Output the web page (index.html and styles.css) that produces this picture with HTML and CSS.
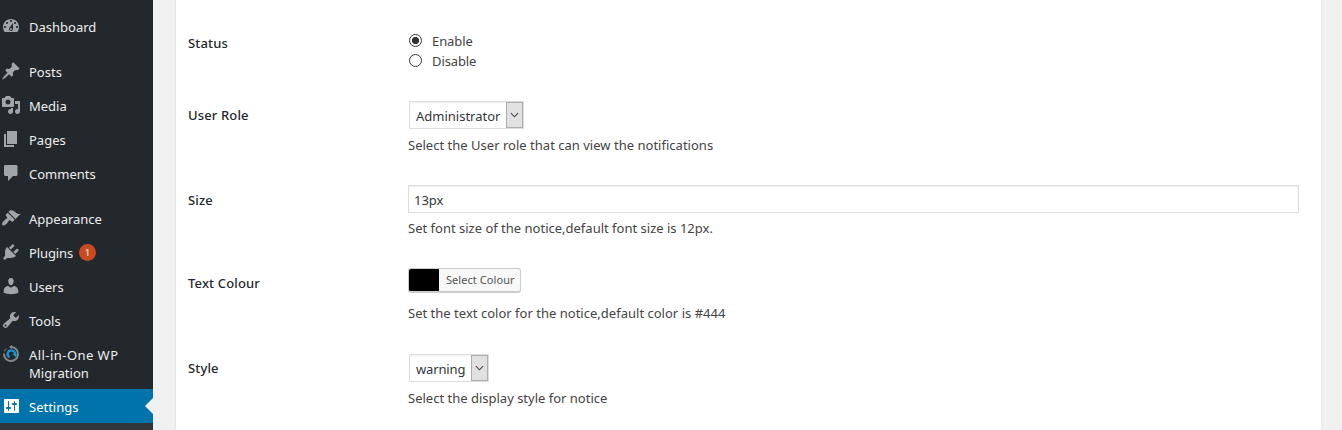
FILE: index.html
```html
<!DOCTYPE html>
<html lang="en">
<head>
<meta charset="utf-8">
<title>Settings</title>
<link rel="stylesheet" href="styles.css">
</head>
<body>
<div class="layout">
  <nav class="menu">
    <a class="item"><svg class="icon" viewBox="0 0 20 20"><path fill-rule="evenodd" d="M3.76 16h12.48c1.1-1.37 1.76-3.11 1.76-5 0-4.42-3.58-8-8-8s-8 3.58-8 8c0 1.89.66 3.63 1.76 5zM10 4c.55 0 1 .45 1 1s-.45 1-1 1-1-.45-1-1 .45-1 1-1zM6 6c.55 0 1 .45 1 1s-.45 1-1 1-1-.45-1-1 .45-1 1-1zm8 0c.55 0 1 .45 1 1s-.45 1-1 1-1-.45-1-1 .45-1 1-1zm-5.37 5.55L12 7v6c0 1.1-.9 2-2 2s-2-.9-2-2c0-.57.24-1.08.63-1.45zM4 10c.55 0 1 .45 1 1s-.45 1-1 1-1-.45-1-1 .45-1 1-1zm12 0c.55 0 1 .45 1 1s-.45 1-1 1-1-.45-1-1 .45-1 1-1zm-5 3c0-.55-.45-1-1-1s-1 .45-1 1 .45 1 1 1 1-.45 1-1z"/></svg><span>Dashboard</span></a>
    <div class="separator"></div>
    <a class="item"><svg class="icon" viewBox="0 0 20 20"><path d="M10.44 3.02l1.82-1.82 6.36 6.35-1.83 1.82c-1.05-.68-2.48-.57-3.41.36l-.75.75c-.92.93-1.04 2.35-.35 3.41l-1.83 1.82-2.41-2.41-2.8 2.79c-.42.42-3.38 2.71-3.8 2.29s1.86-3.39 2.28-3.81l2.79-2.79L4.1 9.36l1.83-1.82c1.05.69 2.48.57 3.4-.36l.75-.75c.93-.92 1.05-2.35.36-3.41z"/></svg><span>Posts</span></a>
    <a class="item"><svg class="icon" viewBox="0 0 20 20"><path fill-rule="evenodd" d="M13 11V4c0-.55-.45-1-1-1h-1.67L9 1H5L3.67 3H2c-.55 0-1 .45-1 1v7c0 .55.45 1 1 1h10c.55 0 1-.45 1-1zM7 4.5c1.38 0 2.5 1.12 2.5 2.5S8.38 9.5 7 9.5 4.5 8.38 4.5 7 5.62 4.5 7 4.5zM14 6h5v10.5c0 1.38-1.12 2.5-2.5 2.5S14 17.88 14 16.5s1.12-2.5 2.5-2.5c.17 0 .34.02.5.05V9h-3V6zm-4 8.05V13h2v3.5c0 1.38-1.12 2.5-2.5 2.5S7 17.88 7 16.5 8.12 14 9.5 14c.17 0 .34.02.5.05z"/></svg><span>Media</span></a>
    <a class="item"><svg class="icon" viewBox="0 0 20 20"><path d="M6 15V2h10v13H6zm-1 1h8v2H3V5h2v11z"/></svg><span>Pages</span></a>
    <a class="item"><svg class="icon" viewBox="0 0 20 20"><path d="M4 2h11c.83 0 1.5.67 1.5 1.5v8c0 .83-.67 1.5-1.5 1.5h-3l-5 5v-5H4.500c-.83 0-1.500-.67-1.500-1.500v-8C3 2.670 3.400 2 4 2z"/></svg><span>Comments</span></a>
    <div class="separator"></div>
    <a class="item"><svg class="icon" viewBox="0 0 20 20"><path d="M14.48 11.06L7.41 3.99l1.5-1.5c.5-.56 2.3-.47 3.51.32 1.21.8 1.43 1.28 2.91 2.1 1.18.64 2.45 1.26 4.45.85zm-.71.71L6.7 4.7 4.93 6.47c-.39.39-.39 1.02 0 1.41l1.06 1.06c.39.39.39 1.03 0 1.42-.6.6-1.43 1.11-2.21 1.69-.35.26-.7.53-1.01.84C1.43 14.23.4 16.08 1.4 17.07c.99 1 2.84-.03 4.18-1.36.31-.31.58-.66.85-1.02.57-.78 1.08-1.61 1.69-2.21.39-.39 1.02-.39 1.41 0l1.06 1.06c.39.39 1.02.39 1.41 0z"/></svg><span>Appearance</span></a>
    <a class="item plugins"><svg class="icon" viewBox="0 0 20 20"><path d="M13.11 4.36L9.87 7.6 8 5.73l3.24-3.24c.35-.34 1.05-.2 1.56.32.52.51.66 1.21.31 1.55zm-8 1.77l.91-1.12 9.01 9.01-1.19.84c-.71.71-2.63 1.16-3.82 1.16H6.14L4.9 17.26c-.59.59-1.54.59-2.12 0-.59-.58-.59-1.53 0-2.12l1.24-1.24v-3.88c0-1.13.4-3.19 1.09-3.89zm7.26 3.97l3.24-3.24c.34-.35 1.04-.21 1.55.31.52.51.66 1.21.31 1.55l-3.24 3.25z"/></svg><span>Plugins</span><b class="count">1</b></a>
    <a class="item"><svg class="icon" viewBox="0 0 20 20"><path d="M10 9.25c-2.27 0-2.73-3.44-2.73-3.44C7 4.02 7.82 2 9.97 2c2.16 0 2.98 2.02 2.71 3.81 0 0-.41 3.44-2.68 3.44zm0 2.57L12.72 10c2.39 0 4.52 2.33 4.52 4.53v2.49s-3.65 1.13-7.24 1.13c-3.65 0-7.24-1.13-7.24-1.13v-2.49c0-2.25 1.94-4.48 4.47-4.48z"/></svg><span>Users</span></a>
    <a class="item"><svg class="icon" viewBox="0 0 20 20"><path fill-rule="evenodd" d="M16.68 9.77c-1.34 1.34-3.3 1.67-4.95.99l-5.41 6.52c-.99.99-2.59.99-3.58 0s-.99-2.59 0-3.57l6.52-5.42c-.68-1.65-.35-3.61.99-4.95 1.28-1.28 3.12-1.62 4.72-1.06l-2.89 2.89 2.82 2.82 2.86-2.87c.53 1.58.18 3.39-1.08 4.65zM3.81 16.21c.4.39 1.04.39 1.43 0 .4-.4.4-1.04 0-1.43-.39-.4-1.03-.4-1.43 0-.39.39-.39 1.03 0 1.43z"/></svg><span>Tools</span></a>
    <a class="item tall"><svg class="icon" viewBox="0 0 20 20"><g fill="none"><path d="M10.500 3A7 7 0 1 1 3 9.500" stroke="#82878c" stroke-width="2"/><path d="M3.400 7.400A7 7 0 0 1 5.600 4.600" stroke="#5d6369" stroke-width="1.200"/><path d="M8.600 13.300A3.700 3.700 0 1 1 14 10.500" stroke="#1b98d8" stroke-width="2.200"/></g><path d="M8 3l3-2.200v4.200z" fill="#82878c"/><path d="M11 9.800h4.600v4z" fill="#1b98d8"/></svg><span>All-in-One WP<br><em class="second">Migration</em></span></a>
    <a class="item current"><svg class="icon" viewBox="0 0 20 20"><path fill-rule="evenodd" d="M18 16V4c0-.55-.45-1-1-1H4c-.55 0-1 .45-1 1v12c0 .55.45 1 1 1h13c.55 0 1-.45 1-1zM8 11h1c.55 0 1 .45 1 1s-.45 1-1 1H8v1.5c0 .28-.22.5-.5.5s-.5-.22-.5-.5V13H6c-.55 0-1-.45-1-1s.45-1 1-1h1V5.5c0-.28.22-.5.5-.5s.5.22.5.5V11zm5-2h-1c-.55 0-1-.45-1-1s.45-1 1-1h1V5.5c0-.28.22-.5.5-.5s.5.22.5.5V7h1c.55 0 1 .45 1 1s-.45 1-1 1h-1v5.5c0 .28-.22.5-.5.5s-.5-.22-.5-.5V9z"/></svg><span>Settings</span><i class="notch"></i></a>
    <div class="submenu"></div>
  </nav>
  <main class="panel">
    <section class="row status">
      <div class="label">Status</div>
      <div class="field">
        <label class="option"><i class="radio checked"></i><span>Enable</span></label>
        <label class="option"><i class="radio"></i><span>Disable</span></label>
      </div>
    </section>
    <section class="row role">
      <div class="label">User Role</div>
      <div class="field">
        <div class="select"><span class="value">Administrator</span><span class="arrow"><svg viewBox="0 0 10 6"><path d="M1 1l4 4 4-4"/></svg></span></div>
        <p class="hint">Select the User role that can view the notifications</p>
      </div>
    </section>
    <section class="row size">
      <div class="label">Size</div>
      <div class="field">
        <div class="input">13px</div>
        <p class="hint">Set font size of the notice,default font size is 12px.</p>
      </div>
    </section>
    <section class="row colour">
      <div class="label">Text Colour</div>
      <div class="field">
        <div class="picker"><span class="swatch"></span><span class="caption">Select Colour</span></div>
        <p class="hint">Set the text color for the notice,default color is #444</p>
      </div>
    </section>
    <section class="row style">
      <div class="label">Style</div>
      <div class="field">
        <div class="select narrow"><span class="value">warning</span><span class="arrow"><svg viewBox="0 0 10 6"><path d="M1 1l4 4 4-4"/></svg></span></div>
        <p class="hint">Select the display style for notice</p>
      </div>
    </section>
  </main>
</div>
</body>
</html>
```
FILE: styles.css
```css
* { box-sizing: border-box; }
body {
  margin: 0;
  background: #f0f0f0;
  color: #444;
  font: 13px/18px "Noto Sans", "Open Sans", sans-serif;
  overflow: hidden;
}
.layout { display: flex; height: 430px; }

.menu {
  flex: none;
  width: 153px;
  padding-top: 9px;
  background: #23282d;
  color: #eee;
  font-size: 13px;
}
.item {
  display: flex;
  align-items: flex-start;
  height: 34px;
  padding: 9px 0 0 1px;
}
.item span { margin-left: 8px; white-space: nowrap; }
.icon { flex: none; width: 20px; height: 20px; margin-top: -2px; fill: #a0a5aa; }
.separator { height: 11px; }
.tall { height: 52px; letter-spacing: .45px; }
.second { font-style: normal; letter-spacing: .05px; }
.plugins span { letter-spacing: -.1px; }
.current { position: relative; background: #0073aa; color: #fff; }
.current .icon { fill: #fff; }
.notch {
  position: absolute;
  right: 0;
  top: 9px;
  border: 8px solid transparent;
  border-left: 0;
  border-right-color: #f0f0f0;
}
.submenu { height: 7px; background: #32373c; }
.count {
  width: 17px;
  height: 17px;
  margin-left: 6px;
  border-radius: 50%;
  background: #ca4a1f;
  color: #fff;
  font-size: 9px;
  font-weight: 400;
  line-height: 17px;
  text-align: center;
}

.panel {
  flex: 1;
  margin: 0 20px 0 22px;
  padding: 15px 22px 0 12px;
  border: solid #e5e5e5;
  border-width: 0 1px;
  background: #fff;
}
.row { display: grid; grid-template-columns: 220px 1fr; height: 84px; }
.label { padding-top: 19px; color: #23282d; font-weight: 500; letter-spacing: .15px; }
.field { padding-top: 14px; }
.status { height: 72px; }
.status .field { padding-top: 16px; }
.colour { height: 86px; }
.size { height: 83px; }
.size .label, .colour .label { padding-top: 20px; }

.option { display: flex; height: 20px; align-items: center; letter-spacing: -.1px; }
.radio {
  width: 13px;
  height: 13px;
  margin: -2px 10px 0 1px;
  border: 1px solid #333;
  border-radius: 50%;
}
.checked { background: radial-gradient(circle, #333 3.3px, transparent 3.9px); }

.hint { margin: 7px 0 0; letter-spacing: .015px; }
.size .hint, .style .hint { letter-spacing: 0; }
.size .hint { margin-top: 6px; }
.select {
  display: flex;
  justify-content: space-between;
  width: 115px;
  height: 28px;
  margin-left: 1px;
  border: 1px solid #ddd;
  box-shadow: inset 0 1px 2px rgba(0, 0, 0, .07);
}
.narrow { width: 80px; }
.value { padding: 5px 0 0 6px; color: #32373c; white-space: nowrap; }
.narrow .value { letter-spacing: -.15px; }
.arrow {
  display: grid;
  place-items: center;
  width: 17px;
  border: 1px solid #adadad;
  background: #e1e1e1;
}
.arrow svg { width: 9px; height: 6px; fill: none; stroke: #444; stroke-width: 1.2; }
.input {
  height: 28px;
  padding: 5px;
  border: 1px solid #ddd;
  box-shadow: inset 0 1px 2px rgba(0, 0, 0, .07);
  color: #32373c;
}
.picker {
  display: flex;
  width: 113px;
  height: 25px;
  border: 1px solid #ccc;
  border-bottom-width: 2px;
  border-radius: 3px;
  background: #f7f7f7;
  overflow: hidden;
}
.swatch { width: 30px; background: #000; }
.caption { padding-left: 7px; color: #555; font-size: 11px; line-height: 22px; white-space: nowrap; letter-spacing: .06px; }
.colour .hint { margin-top: 11px; }
```
